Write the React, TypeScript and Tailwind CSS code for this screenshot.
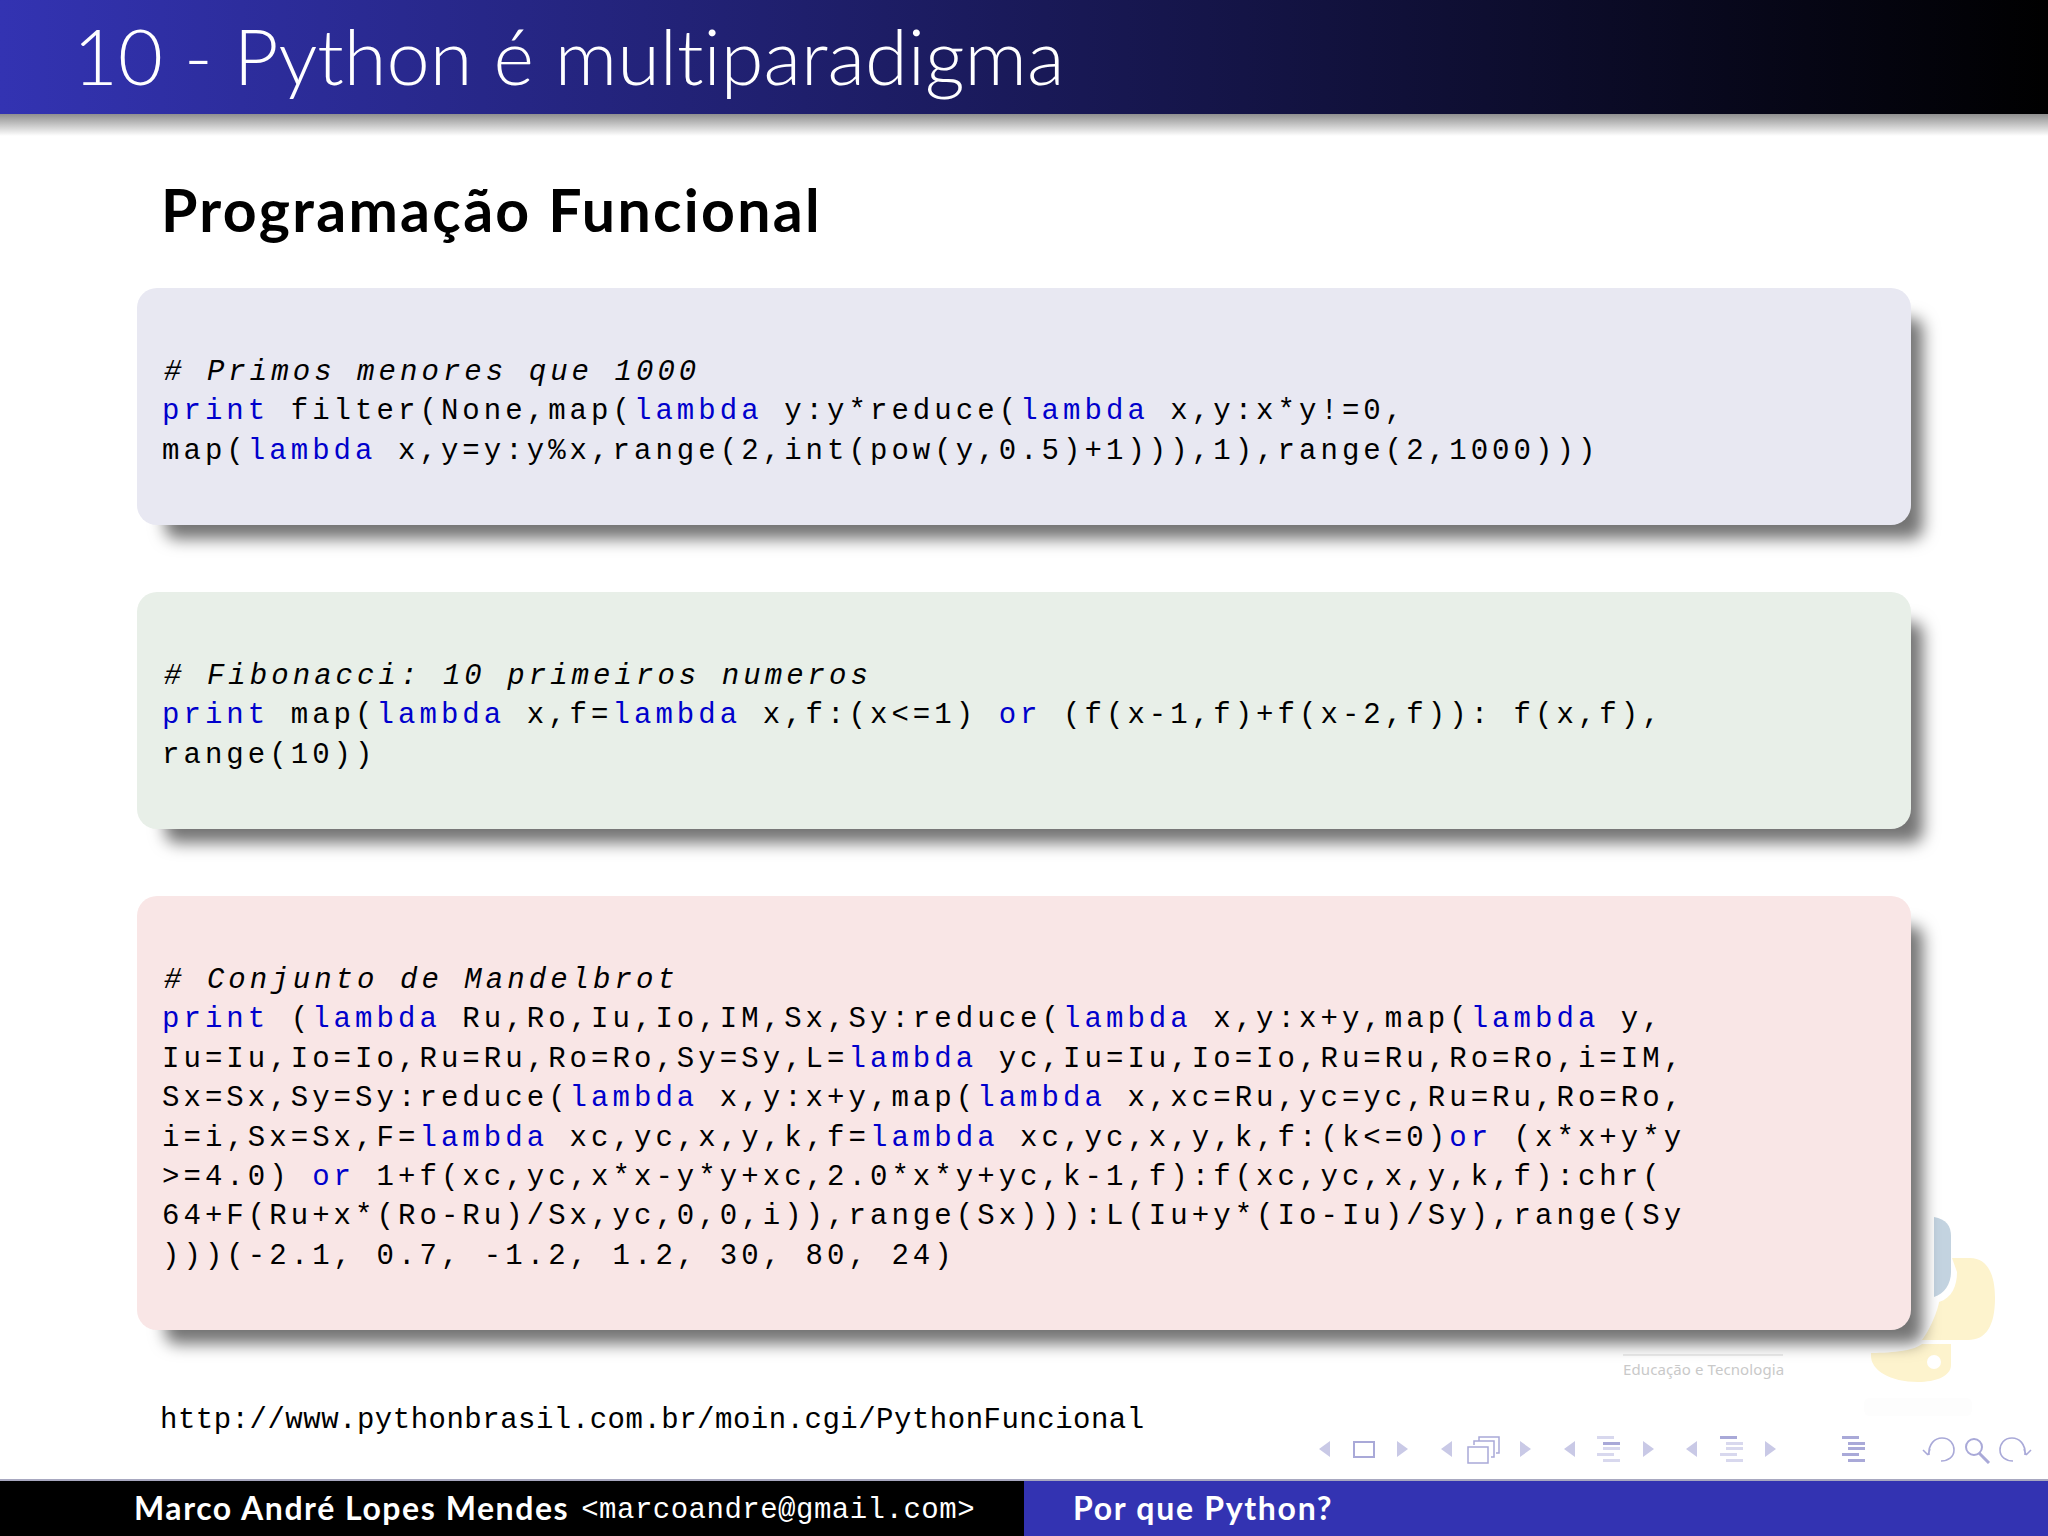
import React from 'react';

const SANS = 'font-["Lato","Noto_Sans",sans-serif] [font-variant-ligatures:none]';

const BLOCKS = [
  {
    bg: 'bg-[#e8e8f2]',
    comment: '# Primos menores que 1000',
    lines: [
      'print filter(None,map(lambda y:y*reduce(lambda x,y:x*y!=0,',
      'map(lambda x,y=y:y%x,range(2,int(pow(y,0.5)+1))),1),range(2,1000)))',
    ],
  },
  {
    bg: 'bg-[#e8efe8]',
    comment: '# Fibonacci: 10 primeiros numeros',
    lines: [
      'print map(lambda x,f=lambda x,f:(x<=1) or (f(x-1,f)+f(x-2,f)): f(x,f),',
      'range(10))',
    ],
  },
  {
    bg: 'bg-[#f9e6e6]',
    comment: '# Conjunto de Mandelbrot',
    lines: [
      'print (lambda Ru,Ro,Iu,Io,IM,Sx,Sy:reduce(lambda x,y:x+y,map(lambda y,',
      'Iu=Iu,Io=Io,Ru=Ru,Ro=Ro,Sy=Sy,L=lambda yc,Iu=Iu,Io=Io,Ru=Ru,Ro=Ro,i=IM,',
      'Sx=Sx,Sy=Sy:reduce(lambda x,y:x+y,map(lambda x,xc=Ru,yc=yc,Ru=Ru,Ro=Ro,',
      'i=i,Sx=Sx,F=lambda xc,yc,x,y,k,f=lambda xc,yc,x,y,k,f:(k<=0)or (x*x+y*y',
      '>=4.0) or 1+f(xc,yc,x*x-y*y+xc,2.0*x*y+yc,k-1,f):f(xc,yc,x,y,k,f):chr(',
      '64+F(Ru+x*(Ro-Ru)/Sx,yc,0,0,i)),range(Sx))):L(Iu+y*(Io-Iu)/Sy),range(Sy',
      ')))(-2.1, 0.7, -1.2, 1.2, 30, 80, 24)',
    ],
  },
];

function CodeLine({ text }: { text: string }) {
  const parts = text.split(/\b(print|lambda|or)\b/);
  return (
    <div className="h-[39.4px] whitespace-pre">
      {parts.map((p, i) =>
        i % 2 === 1 ? (
          <span key={i} className="text-[#0000cc]">{p}</span>
        ) : (
          <span key={i}>{p}</span>
        )
      )}
    </div>
  );
}

function Tri({ x, dir, o }: { x: number; dir: 'l' | 'r'; o?: number }) {
  const d = dir === 'l' ? `M${x + 11} 5 L${x} 13 L${x + 11} 21 Z` : `M${x} 5 L${x + 11} 13 L${x} 21 Z`;
  return <path d={d} fill="#c9c9e6" opacity={o ?? 1} />;
}

function Lines({ x, strong }: { x: number; strong: number }) {
  const rows = [
    [x, 0, 17],
    [x + 6, 6, 17],
    [x + 6, 11, 17],
    [x, 17, 17],
    [x + 6, 23, 17],
  ];
  return (
    <g>
      {rows.map((r, i) => (
        <rect key={i} x={r[0]} y={r[1]} width={r[2]} height={3} fill={i === strong || strong === -1 ? '#a9a9d8' : '#d8d8ee'} />
      ))}
    </g>
  );
}

function NavIcons() {
  return (
    <svg className="absolute left-[1310px] top-[1436px]" width="730" height="28" viewBox="0 0 730 28" fill="none">
      <Tri x={9} dir="l" />
      <rect x="44" y="6" width="20" height="15" stroke="#a9a9d8" strokeWidth="2" />
      <Tri x={87} dir="r" />
      <Tri x={131} dir="l" />
      <path d="M169 5V1h20v16h-3M164 9V5h20v16h-3" stroke="#a9a9d8" strokeWidth="1.5" />
      <rect x="158" y="11" width="20" height="16" stroke="#a9a9d8" strokeWidth="1.5" fill="#fff" />
      <Tri x={210} dir="r" />
      <Tri x={254} dir="l" />
      <Lines x={287} strong={1} />
      <Tri x={333} dir="r" />
      <Tri x={376} dir="l" />
      <Lines x={410} strong={0} />
      <Tri x={455} dir="r" />
      <Lines x={532} strong={-1} />
      <path d="M620 13 L618 19 M618 19 L613 14 M619 19 C618 8 625 2 632 2 C640 2 644 8 644 14 C644 21 638 25 631 25" stroke="#a9a9d8" strokeWidth="1.6" />
      <circle cx="664" cy="11" r="8" stroke="#a9a9d8" strokeWidth="2" />
      <path d="M669 17 L679 27" stroke="#a9a9d8" strokeWidth="3" />
      <path d="M714 13 L716 19 M716 19 L721 14 M715 19 C716 8 709 2 702 2 C694 2 690 8 690 14 C690 21 696 25 703 25" stroke="#a9a9d8" strokeWidth="1.6" />
    </svg>
  );
}

function PythonMark() {
  return (
    <svg className="absolute left-[1860px] top-[1210px]" width="150" height="210" viewBox="0 0 150 210" fill="none">
      <path d="M74 7 C86 9 91 16 91 26 L91 62 C91 74 84 84 74 87 Z" fill="#c3d3e0" />
      <path d="M92 48 L110 48 C126 48 135 62 135 88 C135 116 126 130 108 130 L62 130 C70 120 78 100 79 92 C92 88 97 76 97 62 Z" fill="#fdf3cd" />
      <path d="M91 134 L91 155 C91 166 76 172 58 172 C30 172 11 160 11 146 L11 143 C35 143 55 140 62 134 Z" fill="#fdf3cd" />
      <circle cx="74" cy="152" r="7" fill="#ffffff" />
      <rect x="4" y="188" width="108" height="18" rx="6" fill="#fdfdfd" />
    </svg>
  );
}

export default function App() {
  return (
    <div className="relative h-[1536px] w-[2048px] overflow-hidden bg-white flex flex-col text-black">
      <PythonMark />
      <div className="absolute left-[1623px] top-[1354px] w-[160px] border-t-2 border-[#ececec] pt-[1px] font-['Noto_Sans',sans-serif] text-[15px] leading-[24px] tracking-[0.1px] text-[#c9c9c9] whitespace-nowrap">
        Educação e Tecnologia
      </div>
      <NavIcons />

      <header className="relative h-[114px] shrink-0 bg-linear-to-r/srgb from-[#3333b2] to-[#000000] pl-[73px]">
        <h1 className={`${SANS} font-light text-[77.5px] leading-[112px] text-white whitespace-nowrap`}>10 - Python é multiparadigma</h1>
      </header>
      <div className="h-[22px] shrink-0 bg-linear-to-b/srgb from-[#8f8f8f] to-[#ffffff]" />

      <main className="relative flex-1 pl-[137px]">
        <h2 className={`${SANS} font-bold pl-[24px] mt-[36px] text-[59px] leading-[76px] tracking-[2.3px] whitespace-nowrap`}>Programação Funcional</h2>
        <div className="mt-[40px] flex flex-col gap-[66.8px]">
          {BLOCKS.map((b) => (
            <div
              key={b.comment}
              className={`${b.bg} w-[1774px] rounded-[20px] pl-[25px] pt-[65px] pb-[54px] shadow-[20px_22px_16px_-8px_rgba(0,0,0,0.55)] font-['Liberation_Mono',monospace] text-[29px] leading-[39.4px] tracking-[4.05px]`}
            >
              <div className="italic h-[39.4px] whitespace-pre pl-[2px]">{b.comment}</div>
              {b.lines.map((l) => (
                <CodeLine key={l} text={l} />
              ))}
            </div>
          ))}
        </div>
        <div className="mt-[71px] pl-[23px] font-['Liberation_Mono',monospace] text-[29px] leading-[40px] tracking-[0.5px] whitespace-pre">
          http://www.pythonbrasil.com.br/moin.cgi/PythonFuncional
        </div>
      </main>

      <footer className="h-[57px] shrink-0 flex border-t-2 border-[#a8a8c0] text-white">
        <div className="w-[1024px] bg-black pl-[134px] pb-[2px] flex items-center whitespace-pre">
          <span className={`${SANS} font-bold text-[32px] tracking-[1.55px]`}>Marco André Lopes Mendes</span>
          <span className="ml-[12px] pt-[7px] font-['Liberation_Mono',monospace] text-[29px] tracking-[0.5px]">{'<marcoandre@gmail.com>'}</span>
        </div>
        <div className={`flex-1 bg-[#3333b2] pl-[49px] pb-[2px] flex items-center ${SANS} font-bold text-[32px] tracking-[1.7px]`}>Por que Python?</div>
      </footer>
    </div>
  );
}
